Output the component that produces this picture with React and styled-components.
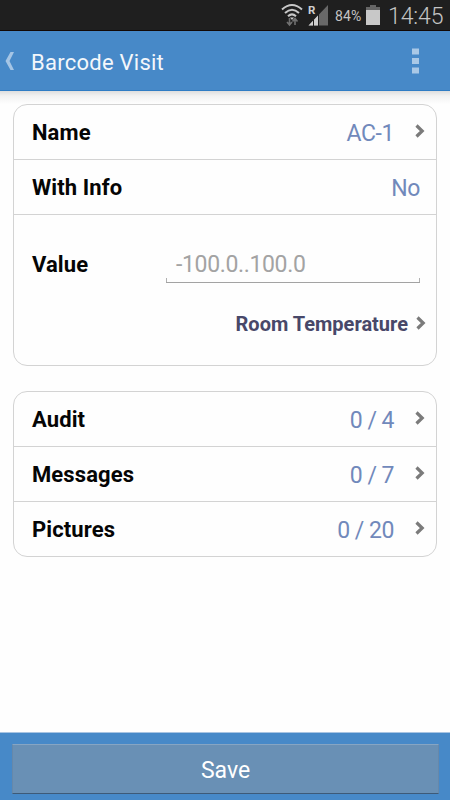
import React from "react";
import styled, { createGlobalStyle } from "styled-components";

const Global = createGlobalStyle`
  * { box-sizing: border-box; }
  body { margin: 0; background: #fff; font-family: Roboto, "Liberation Sans", sans-serif; }
`;

const Screen = styled.div`
  width: 450px;
  height: 800px;
  display: flex;
  flex-direction: column;
  background: #fefefe;
  overflow: hidden;
`;

const StatusBar = styled.div`
  height: 31px;
  flex: none;
  display: flex;
  align-items: center;
  justify-content: flex-end;
  padding-right: 7px;
  background: #1f1f1f;
  border-bottom: 1px solid #120804;
  color: #c4c4c4;
`;

const StatusIcons = styled.svg`
  width: 54px;
  height: 30px;
  flex: none;
`;

const BatteryLevel = styled.span`
  width: 28px;
  font-size: 14px;
  letter-spacing: 0.1px;
  line-height: 30px;
  padding-top: 2px;
  white-space: nowrap;
`;

const BatteryIcon = styled.svg`
  width: 14px;
  height: 22px;
  margin-left: 3px;
  flex: none;
`;

const Clock = styled.span`
  width: 55px;
  margin-left: 8px;
  padding-top: 3px;
  font-size: 23px;
  font-weight: 300;
  letter-spacing: -0.1px;
  line-height: 30px;
  white-space: nowrap;
`;

const Header = styled.header`
  height: 60px;
  flex: none;
  display: flex;
  align-items: center;
  padding: 0 31px 0 5px;
  background: #4789c8;
  border-bottom: 1px solid #2f7cc4;
  color: #f3f7fb;
`;

const BackIcon = styled.svg`
  width: 10px;
  height: 20px;
  margin-top: 1px;
`;

const Title = styled.h1`
  flex: 1;
  margin: 3px 0 0 16px;
  font-size: 22px;
  font-weight: 400;
  letter-spacing: 0.25px;
`;

const MenuIcon = styled.svg`
  width: 7px;
  height: 26px;
`;

const Content = styled.main`
  flex: 1;
  display: flex;
  flex-direction: column;
  gap: 25px;
  padding: 13px 13px 0;
  background: linear-gradient(#dedede 0, #f2f2f2 5px, #fefefe 13px);
`;

const Card = styled.section`
  height: ${(p) => p.$height}px;
  flex: none;
  background: #fefefe;
  border: 1px solid #d3d3d3;
  border-radius: 14px;
`;

const Row = styled.div`
  height: ${(p) => (p.$last ? 54 : 55)}px;
  display: flex;
  align-items: center;
  padding: 1px ${(p) => (p.$plain ? 16 : 11)}px 0 18px;
  border-bottom: ${(p) => (p.$last ? "none" : "1px solid #d3d3d3")};
`;

const Label = styled.span`
  flex: 1;
  font-size: 22px;
  font-weight: 700;
  letter-spacing: 0.1px;
  color: #050505;
`;

const Value = styled.span`
  font-size: 23px;
  font-weight: 400;
  letter-spacing: -0.4px;
  word-spacing: -0.3px;
  margin-top: 1px;
  color: #7189bb;
`;

const Chevron = styled.svg`
  width: 11px;
  height: 16px;
  margin: -3px 0 0 ${(p) => p.$gap}px;
  flex: none;
`;

const ValueRow = styled.div`
  display: flex;
  align-items: center;
  height: 38px;
  margin-top: 30px;
  padding: 0 16px 0 18px;
`;

const Field = styled.div`
  width: 254px;
  height: 38px;
  padding-left: 10px;
  font-size: 23px;
  letter-spacing: -0.35px;
  line-height: 40px;
  color: #a3a3a3;
  background:
    linear-gradient(#a3a3a3, #a3a3a3) 0 100% / 100% 1px no-repeat,
    linear-gradient(#b0b0b0, #b0b0b0) 0 100% / 1px 5px no-repeat,
    linear-gradient(#b0b0b0, #b0b0b0) 100% 100% / 1px 5px no-repeat;
`;

const UnitRow = styled.div`
  display: flex;
  align-items: center;
  justify-content: flex-end;
  height: 40px;
  margin-top: 21px;
  padding-right: 10px;
`;

const Unit = styled.span`
  font-size: 20px;
  font-weight: 700;
  color: #484869;
`;

const Footer = styled.footer`
  height: 68px;
  flex: none;
  padding: 11px 11px 0 12px;
  background: #4789c8;
  border-top: 1px solid #a8c4e2;
`;

const SaveButton = styled.button`
  display: block;
  width: 100%;
  height: 50px;
  padding: 2px 0 0;
  border: solid;
  border-width: 1px;
  border-color: #86a5c3 #6688aa #3d5a78 #6688aa;
  border-radius: 1px;
  background: #6990b5;
  color: #fff;
  font: 400 23px Roboto, "Liberation Sans", sans-serif;
`;

const Arrow = ({ gap }) => (
  <Chevron $gap={gap} viewBox="0 0 11 16">
    <path d="M2.500 2.500 8.200 8 2.500 13.500" fill="none" stroke="#7b7b7b" strokeWidth="3.2" />
  </Chevron>
);

const counters = [
  { label: "Audit", value: "0 / 4" },
  { label: "Messages", value: "0 / 7" },
  { label: "Pictures", value: "0 / 20" },
];

export default function App() {
  return (
    <Screen>
      <Global />
      <StatusBar>
        <StatusIcons viewBox="0 0 54 30">
          <g fill="none" stroke="#c8c8c8" strokeWidth="2">
            <path d="M1 9.5Q11 0.5 21 9.5" />
            <path d="M4 13Q11 6.5 18 13" />
            <path d="M7 16.2Q11 12.5 15 16.2" />
          </g>
          <path d="M9 17.5h4L11 20z" fill="#c8c8c8" />
          <path d="M8.5 18v6M6 22l2.500 3 2.500-3M14 25v-6M11.500 21.500l2.500-3 2.500 3" fill="none" stroke="#707070" strokeWidth="1.6" />
          <path d="M27.500 25.500 47 5v20.500z" fill="#686868" />
          <path d="M27.500 25.500 37 15.500v10z" fill="#d0d0d0" />
          <path d="M32.500 20v6M37.500 14v12" stroke="#1f1f1f" strokeWidth="1" />
          <text x="27" y="13.500" fontSize="11.500" fontWeight="700" fill="#d0d0d0">R</text>
        </StatusIcons>
        <BatteryLevel>84%</BatteryLevel>
        <BatteryIcon viewBox="0 0 14 22">
          <path d="M4 1h6v3H4zM0 3h14v3H0z" fill="#666" />
          <path d="M0 6h14v15H0z" fill="#c8c8c8" />
        </BatteryIcon>
        <Clock>14:45</Clock>
      </StatusBar>
      <Header>
        <BackIcon viewBox="0 0 10 20">
          <path d="M5.500 1H9L4.500 10 9 19H5.500L0.500 10z" fill="#a5c5e5" />
        </BackIcon>
        <Title>Barcode Visit</Title>
        <MenuIcon viewBox="0 0 7 26">
          <path d="M0 .5h7v6H0zM0 10h7v6H0zM0 19.500h7v6H0z" fill="#a9c8e6" />
        </MenuIcon>
      </Header>
      <Content>
        <Card $height={262}>
          <Row>
            <Label>Name</Label>
            <Value>AC-1</Value>
            <Arrow gap={20} />
          </Row>
          <Row $plain>
            <Label>With Info</Label>
            <Value>No</Value>
          </Row>
          <ValueRow>
            <Label>Value</Label>
            <Field>-100.0..100.0</Field>
          </ValueRow>
          <UnitRow>
            <Unit>Room Temperature</Unit>
            <Arrow gap={7} />
          </UnitRow>
        </Card>
        <Card $height={166}>
          {counters.map((c, i) => (
            <Row key={c.label} $last={i === counters.length - 1}>
              <Label>{c.label}</Label>
              <Value>{c.value}</Value>
              <Arrow gap={20} />
            </Row>
          ))}
        </Card>
      </Content>
      <Footer>
        <SaveButton>Save</SaveButton>
      </Footer>
    </Screen>
  );
}
